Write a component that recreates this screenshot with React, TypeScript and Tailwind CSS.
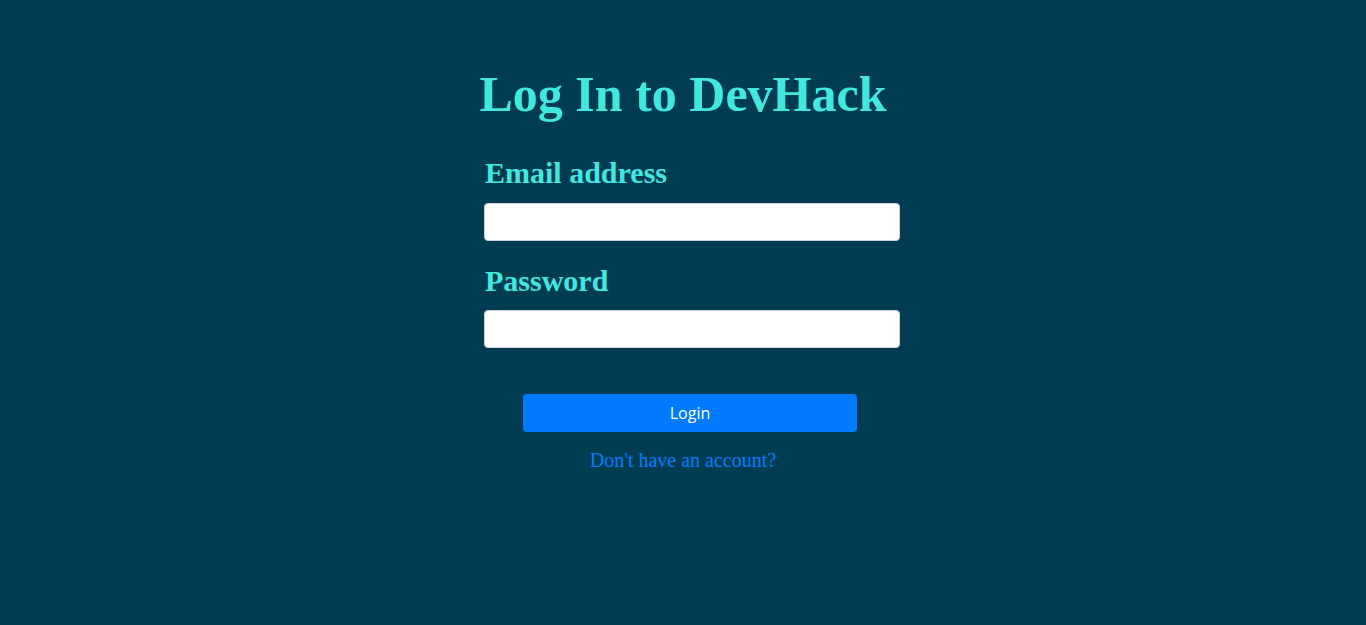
export default function App() {
    return (
        <div className="min-h-[625px] w-full bg-[#003d52] flex flex-col items-center pt-[64px]" style={{ fontFamily: '"Liberation Serif", serif' }}>
            <h1 className="text-[50px] leading-[60px] font-bold text-[#40e8e0]">Log In to DevHack</h1>
            <form className="w-[416px] ml-[18px] mt-[30px] flex flex-col" onSubmit={(e) => e.preventDefault()}>
                <label className="text-[30px] leading-[38px] font-bold text-[#40e8e0] pl-[1px]">Email address</label>
                <input type="email" className="mt-[11px] h-[38px] w-full bg-white rounded-[4px] border border-[#ced4da] px-3" />
                <label className="mt-[21px] text-[30px] leading-[38px] font-bold text-[#40e8e0] pl-[1px]">Password</label>
                <input type="password" className="mt-[10px] h-[38px] w-full bg-white rounded-[4px] border border-[#ced4da] px-3" />
                <button
                    type="submit"
                    className="mt-[46px] ml-[39px] w-[334px] h-[38px] bg-[#007bff] rounded-[4px] text-white text-[16px]"
                    style={{ fontFamily: '"Open Sans", sans-serif' }}
                >
                    Login
                </button>
            </form>
            <a href="#" className="mt-[16px] text-[20px] leading-[24px] text-[#007bff]">Don't have an account?</a>
        </div>
    )
}
